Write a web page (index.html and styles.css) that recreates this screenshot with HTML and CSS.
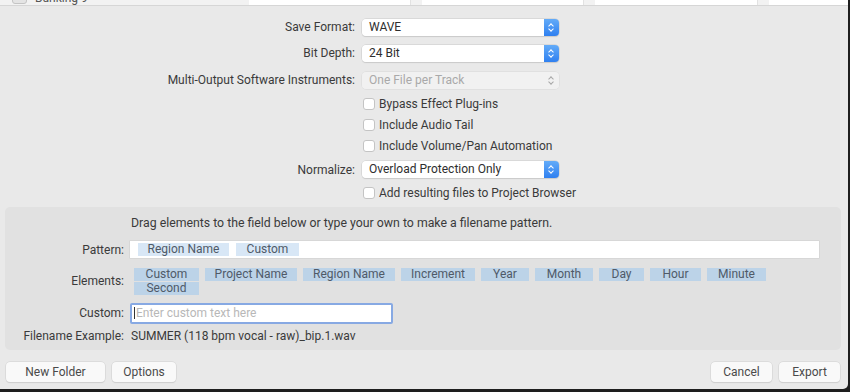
FILE: index.html
```html
<!DOCTYPE html>
<html lang="en">
<head>
    <meta charset="UTF-8">
    <title>Export</title>
    <link rel="stylesheet" href="styles.css">
</head>
<body>
    <div class="window">
        <div class="browser">
            <div class="browser-list">
                <span class="box"></span>
                <span class="browser-name">Bunking 9</span>
            </div>
            <div class="browser-col wide"></div>
            <div class="browser-col"></div>
            <div class="browser-col"></div>
            <div class="browser-col last"></div>
        </div>

        <div class="form">
            <label class="lbl">Save Format:</label>
            <div class="popup"><span class="value">WAVE</span><span class="stepper"></span></div>

            <label class="lbl">Bit Depth:</label>
            <div class="popup"><span class="value">24 Bit</span><span class="stepper"></span></div>

            <label class="lbl">Multi-Output Software Instruments:</label>
            <div class="popup disabled"><span class="value">One File per Track</span><span class="stepper"></span></div>

            <span></span>
            <label class="check"><span class="box"></span>Bypass Effect Plug-ins</label>
            <span></span>
            <label class="check"><span class="box"></span>Include Audio Tail</label>
            <span></span>
            <label class="check"><span class="box"></span>Include Volume/Pan Automation</label>

            <label class="lbl">Normalize:</label>
            <div class="popup"><span class="value">Overload Protection Only</span><span class="stepper"></span></div>

            <span></span>
            <label class="check"><span class="box"></span>Add resulting files to Project Browser</label>
        </div>

        <div class="pattern-box">
            <span></span>
            <p class="hint">Drag elements to the field below or type your own to make a filename pattern.</p>

            <label class="lbl">Pattern:</label>
            <div class="pattern-field">
                <span class="token light">Region Name</span>
                <span class="token light small">Custom</span>
            </div>

            <label class="lbl">Elements:</label>
            <div class="elements">
                <span class="token w65">Custom</span>
                <span class="token w92">Project Name</span>
                <span class="token w92">Region Name</span>
                <span class="token w74">Increment</span>
                <span class="token w48">Year</span>
                <span class="token w58">Month</span>
                <span class="token w45">Day</span>
                <span class="token w51">Hour</span>
                <span class="token w59">Minute</span>
                <span class="token w65">Second</span>
            </div>

            <label class="lbl">Custom:</label>
            <div class="custom-input"><span class="caret"></span>Enter custom text here</div>

            <label class="lbl">Filename Example:</label>
            <span class="example">SUMMER (118 bpm vocal - raw)_bip.1.wav</span>
        </div>

        <div class="footer">
            <button class="btn new-folder">New Folder</button>
            <button class="btn options">Options</button>
            <span class="spacer"></span>
            <button class="btn cancel">Cancel</button>
            <button class="btn export">Export</button>
        </div>
    </div>
</body>
</html>
```

FILE: styles.css
```css
body {
    margin: 0;
    background-color: #1e1e1e;
    font-family: Roboto, "Noto Sans", Arial, sans-serif;
    font-size: 12px;
    color: #3a3a3a;
}
.window {
    width: 848px;
    height: 389px;
    background-color: #e9e9e9;
    border-bottom-right-radius: 5px;
    overflow: hidden;
    display: flex;
    flex-direction: column;
}
.box {
    width: 12px;
    height: 12px;
    box-sizing: border-box;
    border: 1px solid #c4c4c4;
    border-radius: 3px;
    background-color: #fff;
    display: inline-block;
    flex-shrink: 0;
}
.browser {
    height: 5px;
    border-bottom: 1px solid #d6d6d6;
    background-color: #f2f2f2;
    display: flex;
    overflow: hidden;
}
.browser-list {
    width: 240px;
    display: flex;
    gap: 8px;
    padding-left: 12px;
    margin-top: -10px;
    align-items: center;
    color: #555;
}
.browser-list .box {
    width: 15px;
    height: 13px;
    background-color: #e4e4e4;
}
.browser-col {
    width: 164px;
    background-color: #fff;
    border-right: 1px solid #e2e2e2;
    margin-right: 11px;
}
.browser-col.wide {
    width: 163px;
}
.browser-col.last {
    width: 80px;
    margin-right: 0;
    border-right: none;
}
.form {
    display: grid;
    grid-template-columns: 355px 197px;
    grid-template-rows: 26px 26px 28px 20px 21px 21px 27px 19px;
    column-gap: 7px;
    margin-top: 8px;
    align-items: center;
}
.lbl {
    text-align: right;
}
.popup {
    display: flex;
    align-items: center;
    height: 17px;
    border-radius: 4px;
    box-shadow: 0 0 0 0.5px #cacaca, 0 1px 1px rgba(0, 0, 0, 0.13);
}
.value {
    flex: 1;
    height: 17px;
    line-height: 17px;
    padding-left: 7px;
    background-color: #fff;
    border-radius: 4px 0 0 4px;
    color: #2e2e2e;
}
.stepper {
    width: 15px;
    height: 17px;
    border-radius: 0 4px 4px 0;
    background: linear-gradient(#63abf8, #2f80f0);
    position: relative;
}
.stepper::before,
.stepper::after {
    content: "";
    position: absolute;
    left: 5px;
    width: 3px;
    height: 3px;
    border-left: 1.3px solid #fff;
    border-top: 1.3px solid #fff;
}
.stepper::before {
    top: 5px;
    transform: rotate(45deg);
}
.stepper::after {
    top: 8px;
    transform: rotate(225deg);
}
.popup.disabled {
    box-shadow: 0 0 0 0.5px #d8d8d8;
}
.popup.disabled .value {
    background-color: #f1f1f1;
    color: #a9a9a9;
}
.popup.disabled .stepper {
    background: #f1f1f1;
}
.popup.disabled .stepper::before,
.popup.disabled .stepper::after {
    border-color: #a7a7a7;
    border-width: 1px;
}
.check {
    display: flex;
    align-items: center;
    gap: 4px;
    white-space: nowrap;
    padding-left: 1px;
}
.pattern-box {
    margin: 5px 7px 0 5px;
    height: 143px;
    background-color: #e1e1e1;
    border-radius: 5px;
    display: grid;
    grid-template-columns: 119px 1fr;
    grid-template-rows: 31px 23px 40px 24px 22px;
    column-gap: 6px;
    align-items: center;
    padding-right: 22px;
}
.hint {
    margin: 0;
    padding-left: 1px;
    font-size: 12.3px;
}
.pattern-field {
    height: 17px;
    background-color: #fff;
    box-shadow: 0 0 0 0.5px #cdcdcd;
    display: flex;
    align-items: center;
    gap: 7px;
    padding-left: 8px;
}
.token {
    background-color: #bcd3e8;
    color: #4f5a68;
    text-align: center;
    height: 13px;
    line-height: 13px;
}
.token.light {
    background-color: #d8e7f6;
    width: 91px;
}
.token.small {
    width: 63px;
}
.elements {
    display: flex;
    flex-wrap: wrap;
    column-gap: 6px;
    row-gap: 1px;
    padding-left: 4px;
    width: 640px;
}
.w65 { width: 65px; }
.w92 { width: 92px; }
.w74 { width: 74px; }
.w48 { width: 48px; }
.w58 { width: 58px; }
.w45 { width: 45px; }
.w51 { width: 51px; }
.w59 { width: 59px; }
.custom-input {
    width: 257px;
    height: 17px;
    background-color: #fff;
    border: 2px solid #87a9e3;
    border-radius: 2px;
    color: #b8b8b8;
    padding-left: 2px;
    display: flex;
    align-items: center;
    gap: 1px;
}
.caret {
    width: 1px;
    height: 12px;
    background-color: #333;
}
.example {
    padding-left: 1px;
}
.footer {
    display: flex;
    align-items: center;
    gap: 7px;
    padding: 0 8px 0 6px;
    margin-top: 12px;
}
.spacer {
    flex: 1;
}
.btn {
    font-family: inherit;
    font-size: 12px;
    color: #4a4a4a;
    height: 20px;
    padding: 0;
    background-color: #f9f9f9;
    border: none;
    border-radius: 4px;
    box-shadow: 0 0 0 0.5px #cfcfcf, 0 1px 1px rgba(0, 0, 0, 0.12);
}
.new-folder { width: 99px; }
.options { width: 64px; }
.cancel { width: 61px; }
.export { width: 61px; }
```
